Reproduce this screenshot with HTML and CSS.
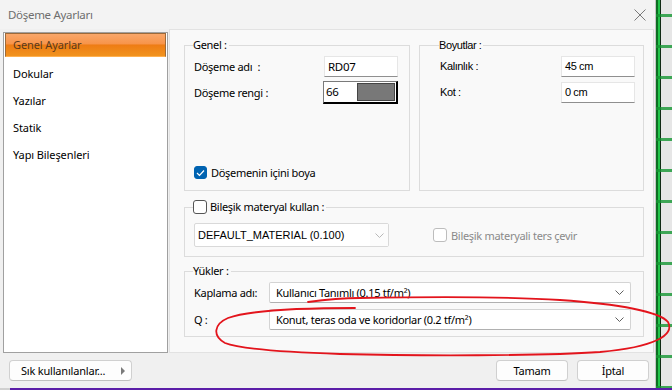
FILE: index.html
```html
<!DOCTYPE html>
<html lang="tr">
<head>
  <meta charset="UTF-8" />
  <title>Döşeme Ayarları</title>
  <link rel="stylesheet" href="styles.css">
</head>
<body>
  <div class="screen">
    <div class="window">
      <div class="titlebar">
        <span class="title">Döşeme Ayarları</span>
        <svg class="close" width="12" height="12" viewBox="0 0 12 12">
          <path d="M0.5 0.5 L11.5 11.5 M11.5 0.5 L0.5 11.5" stroke="#7a7a7a" stroke-width="1" fill="none"/>
        </svg>
      </div>

      <div class="main">
        <ul class="nav">
          <li class="active">Genel Ayarlar</li>
          <li>Dokular</li>
          <li>Yazılar</li>
          <li>Statik</li>
          <li>Yapı Bileşenleri</li>
        </ul>

        <div class="content">
          <div class="top-row">
            <fieldset class="group genel">
              <legend>Genel :</legend>
              <div class="field">
                <label>Döşeme adı&nbsp; :</label>
                <div class="textbox">RD07</div>
              </div>
              <div class="field">
                <label>Döşeme rengi :</label>
                <div class="colorbox">
                  <span class="color-num">66</span>
                  <span class="swatch"></span>
                </div>
              </div>
              <div class="check-row">
                <span class="check on">
                  <svg width="9" height="8" viewBox="0 0 9 8"><path d="M1 4 L3.5 6.5 L8 1.5" stroke="#fff" stroke-width="1.2" fill="none"/></svg>
                </span>
                <span>Döşemenin içini boya</span>
              </div>
            </fieldset>

            <fieldset class="group boyutlar narrow">
              <legend>Boyutlar :</legend>
              <div class="field">
                <label>Kalınlık :</label>
                <div class="textbox">45 cm</div>
              </div>
              <div class="field">
                <label>Kot :</label>
                <div class="textbox">0 cm</div>
              </div>
            </fieldset>
          </div>

          <fieldset class="group bilesik">
            <legend><span class="check"></span><span>Bileşik materyal kullan :</span></legend>
            <div class="bilesik-row">
              <div class="combo small">
                <span class="combo-text">DEFAULT_MATERIAL (0.100)</span>
                <span class="combo-btn"><svg width="9" height="5" viewBox="0 0 9 5"><path d="M0.5 0.5 L4.5 4.5 L8.5 0.5" stroke="#b8b8b8" fill="none"/></svg></span>
              </div>
              <div class="check-row disabled">
                <span class="check"></span>
                <span>Bileşik materyali ters çevir</span>
              </div>
            </div>
          </fieldset>

          <fieldset class="group yukler">
            <legend>Yükler :</legend>
            <div class="load-row">
              <label>Kaplama adı:</label>
              <div class="combo wide">
                <span class="combo-text">Kullanıcı Tanımlı (0.15 tf/m²)</span>
                <svg width="9" height="5" viewBox="0 0 9 5"><path d="M0.5 0.5 L4.5 4.5 L8.5 0.5" stroke="#606060" fill="none"/></svg>
              </div>
            </div>
            <div class="load-row">
              <label>Q :</label>
              <div class="combo wide">
                <span class="combo-text">Konut, teras oda ve koridorlar (0.2 tf/m²)</span>
                <svg width="9" height="5" viewBox="0 0 9 5"><path d="M0.5 0.5 L4.5 4.5 L8.5 0.5" stroke="#606060" fill="none"/></svg>
              </div>
            </div>
          </fieldset>
        </div>
      </div>

      <div class="footer">
        <button class="btn fav">Sık kullanılanlar...<span class="tri"></span></button>
        <span class="spacer"></span>
        <button class="btn">Tamam</button>
        <button class="btn">İptal</button>
      </div>
    </div>
    <div class="desk-edge"></div>
  </div>
  <div class="taskbar"></div>

  <!-- red hand-drawn mark over the load rows -->
  <svg class="annot" width="672" height="390" viewBox="0 0 672 390">
    <path d="M308,302 C330,299 345,298 360,298 C420,297 500,296 560,300 C620,304 660,312 668,322 C675,335 655,347 600,352 C540,356 420,356 340,354 C280,352 240,349 225,343 C212,336 214,324 228,318 C250,310 300,308 355,308"
          stroke="#e3141c" stroke-width="1.8" fill="none" stroke-linecap="round"/>
  </svg>
</body>
</html>
```

FILE: styles.css
```css
body {
  margin: 0;
  width: 672px;
  height: 390px;
  overflow: hidden;
  position: relative;
  background: #f0f0f0;
  font-family: 'Noto Sans', 'Open Sans', sans-serif;
  font-size: 11px;
  letter-spacing: -0.3px;
  color: #000;
}

.screen {
  display: flex;
  height: 388px;
}

.window {
  width: 655px;
  height: 388px;
  flex-shrink: 0;
  border-right: 1px solid #c4c4c4;
  background: #f0f0f0;
  display: flex;
  flex-direction: column;
}

/* bit of the desktop showing at the right */
.desk-edge {
  flex: 1;
  background:
    repeating-linear-gradient(180deg, transparent 0 14px, rgba(20,150,50,0.8) 14px 17px, transparent 17px 31px),
    linear-gradient(90deg, #0d6e22 0 2px, #22c64a 2px 4px, #102a14 4px 5px, #e6e6e6 5px 100%);
}

.taskbar {
  height: 2px;
  background: linear-gradient(90deg, #d0d0d0 0 10px, #5b1ea8 10px 100%);
}

/* title bar */
.titlebar {
  height: 29px;
  display: flex;
  align-items: center;
  padding: 0 9px 0 8px;
  background: #f3f3f3;
}

.title {
  flex: 1;
  color: #6e6e6e;
  font-size: 11.5px;
}

/* main */
.main {
  display: flex;
  height: 324px;
}

.nav {
  list-style: none;
  flex-shrink: 0;
  box-sizing: border-box;
  margin: 3px 0 0 3px;
  padding: 0;
  width: 165px;
  height: 321px;
  background: #fff;
  border: 1px solid #a0a0a0;
}

.nav li {
  height: 27px;
  line-height: 27px;
  padding-left: 9px;
  font-size: 11px;
  letter-spacing: -0.1px;
}

.nav li.active {
  height: 22px;
  line-height: 22px;
  margin: 0 1px 3px 1px;
  padding-left: 7px;
  color: #5a3a1c;
  border: 1px solid #9c6a3a;
  border-bottom-color: #ffb050;
  background: linear-gradient(180deg, #f9a76a 0%, #f7944a 45%, #ee7c14 50%, #f1931e 100%);
}

.content {
  flex-shrink: 0;
  box-sizing: border-box;
  width: 485px;
  margin-left: 1px;
  background: #f9f9f9;
  border: 1px solid #e2e2e2;
  border-right-color: #dcdcdc;
  padding: 8px 9px 0 14px;
  display: flex;
  flex-direction: column;
}

.top-row {
  display: flex;
  gap: 9px;
  margin-bottom: 9px;
}

.group {
  box-sizing: border-box;
  margin: 0;
  border: 1px solid #dcdcdc;
  padding: 0 9px 0 9px;
  min-width: 0;
}

.group legend {
  padding: 0 2px 0 0;
  margin-left: -1px;
  line-height: 14px;
  font-size: 11px;
}

.genel {
  width: 226px;
  height: 153px;
  padding-right: 11px;
  display: flex;
  flex-direction: column;
}

.boyutlar {
  width: 225px;
  height: 153px;
  padding-left: 20px;
  padding-right: 8px;
}

.narrow,
.narrow legend,
.narrow .field,
.narrow .textbox {
  font-family: 'Liberation Sans', Arial, sans-serif;
  font-size: 11px;
  letter-spacing: -0.4px;
}

.field {
  display: flex;
  align-items: center;
  justify-content: space-between;
  height: 20px;
  margin-bottom: 6px;
  font-size: 11px;
}

.genel .field:first-of-type,
.boyutlar .field:first-of-type {
  margin-top: 4px;
}

.textbox {
  width: 69px;
  height: 19px;
  line-height: 19px;
  padding-left: 3px;
  background: #fff;
  border: 1px solid #e6e6e6;
  border-bottom-color: #8f8f8f;
  box-sizing: content-box;
  font-size: 11.5px;
}

.colorbox {
  width: 70px;
  height: 18px;
  display: flex;
  align-items: center;
  padding: 1px;
  border: 1px solid #7a7a7a;
  border-right: 2px solid #000;
  border-bottom: 2px solid #000;
  background: #fff;
}

.color-num {
  width: 31px;
  font-size: 11.5px;
  padding-left: 1px;
}

.swatch {
  flex: 1;
  height: 16px;
  background: #787878;
  border: 1px solid #444;
}

.check-row {
  display: flex;
  align-items: center;
  gap: 4px;
  font-size: 11px;
}

.genel .check-row {
  margin-top: auto;
  margin-bottom: 10px;
}

.check {
  width: 11px;
  height: 11px;
  border: 1px solid #555;
  border-radius: 3px;
  background: #fff;
  display: inline-flex;
  align-items: center;
  justify-content: center;
}

.check.on {
  background: #0063b1;
  border-color: #0063b1;
}

.bilesik legend {
  display: flex;
  align-items: center;
  gap: 3px;
}

.bilesik legend .check {
  width: 12px;
  height: 12px;
}

.bilesik {
  height: 57px;
  padding-left: 9px;
  margin-bottom: 7px;
}

.bilesik-row {
  display: flex;
  align-items: center;
  gap: 44px;
  margin-top: 9px;
}

.check-row.disabled {
  color: #8a8a8a;
}

.check-row.disabled .check {
  border-color: #bdbdbd;
  width: 12px;
  height: 12px;
}

.combo {
  display: flex;
  align-items: center;
  background: #fff;
  border: 1px solid #d9d9d9;
  border-radius: 2px;
  box-sizing: border-box;
}

.combo.small {
  width: 195px;
  height: 24px;
  font-family: 'Liberation Sans', Arial, sans-serif;
  font-size: 11px;
  letter-spacing: 0;
}

.combo.small .combo-text {
  flex: 1;
  padding-left: 3px;
}

.combo-btn {
  width: 18px;
  height: 22px;
  display: flex;
  align-items: center;
  justify-content: center;
  background: #fcfcfc;
}

.yukler {
  height: 73px;
  padding-left: 9px;
  padding-right: 12px;
}

.load-row {
  display: flex;
  align-items: center;
  height: 21px;
  margin-bottom: 6px;
  font-size: 11px;
}

.load-row:first-of-type {
  margin-top: 4px;
}

.load-row label {
  width: 75px;
}

.combo.wide {
  flex: 1;
  height: 21px;
  padding: 0 6px 0 6px;
  border-color: #d4d4d4;
  border-bottom-color: #b0b0b0;
}

.combo.wide .combo-text {
  flex: 1;
}

/* footer buttons */
.footer {
  flex: 1;
  display: flex;
  align-items: center;
  gap: 9px;
  padding: 0 6px 0 9px;
}

.spacer {
  flex: 1;
}

.btn {
  height: 21px;
  width: 72px;
  padding: 0;
  font-family: 'Noto Sans', sans-serif;
  font-size: 11px;
  letter-spacing: -0.2px;
  background: #fdfdfd;
  border: 1px solid #d0d0d0;
  border-bottom-color: #c0c0c0;
  border-radius: 4px;
  color: #000;
}

.btn.fav {
  width: 123px;
  text-align: left;
  padding-left: 11px;
  display: flex;
  align-items: center;
  justify-content: space-between;
  padding-right: 6px;
}

.tri {
  width: 0;
  height: 0;
  border-left: 4px solid #7a7a7a;
  border-top: 4px solid transparent;
  border-bottom: 4px solid transparent;
}

.annot {
  position: absolute;
  left: 0;
  top: 0;
  pointer-events: none;
}
```
